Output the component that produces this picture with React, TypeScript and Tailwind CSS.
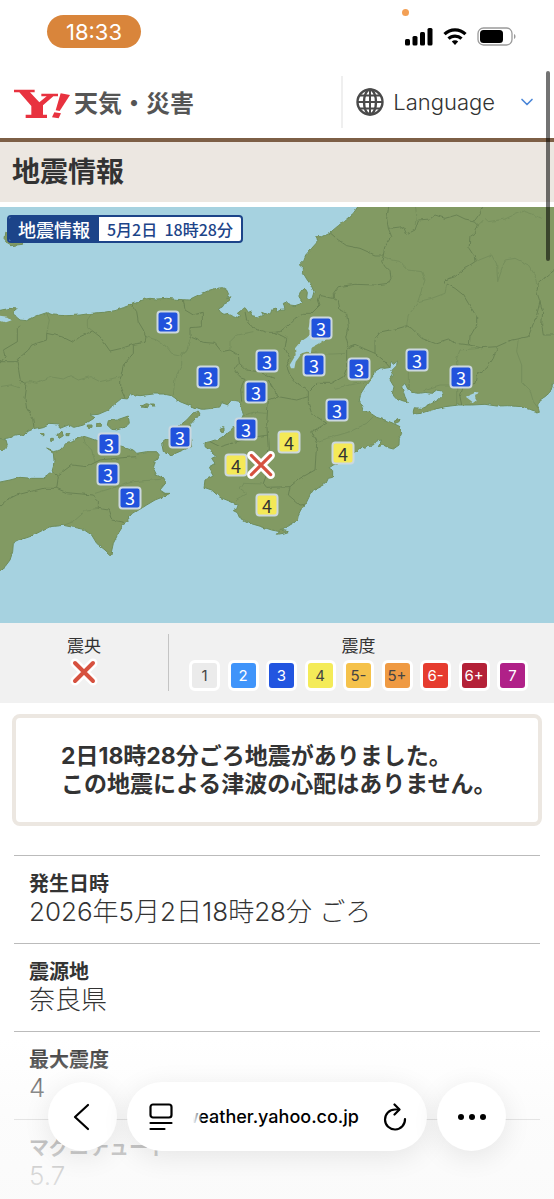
import { ChevronDown } from 'lucide-react'

type Pin = { x: number; y: number; level: 3 | 4 }

const MAP_WIDTH = 554
const MAP_HEIGHT = 416

// Pin centres in map units
const pins: Pin[] = [
  { x: 168, y: 115, level: 3 },
  { x: 321, y: 121, level: 3 },
  { x: 267, y: 154, level: 3 },
  { x: 314, y: 158, level: 3 },
  { x: 359, y: 162, level: 3 },
  { x: 417, y: 153, level: 3 },
  { x: 208, y: 170, level: 3 },
  { x: 461, y: 170, level: 3 },
  { x: 256, y: 185, level: 3 },
  { x: 337, y: 203, level: 3 },
  { x: 246, y: 222, level: 3 },
  { x: 180, y: 230, level: 3 },
  { x: 109, y: 237, level: 3 },
  { x: 108, y: 267, level: 3 },
  { x: 130, y: 291, level: 3 },
  { x: 289, y: 235, level: 4 },
  { x: 343, y: 246, level: 4 },
  { x: 236, y: 258, level: 4 },
  { x: 267, y: 298, level: 4 },
]

const levels = [
  { label: '1', className: 'bg-[#ebebeb] text-[#444]' },
  { label: '2', className: 'bg-[#3f94fa] text-white' },
  { label: '3', className: 'bg-[#2255e0] text-white' },
  { label: '4', className: 'bg-[#f4eb58] text-[#444]' },
  { label: '5-', className: 'bg-[#f5c24b] text-[#444]' },
  { label: '5+', className: 'bg-[#ef9a43] text-[#444]' },
  { label: '6-', className: 'bg-[#e63c2f] text-white' },
  { label: '6+', className: 'bg-[#b42138] text-white' },
  { label: '7', className: 'bg-[#b02188] text-white' },
]

const details = [
  { label: '発生日時', value: '2026年5月2日18時28分 ごろ' },
  { label: '震源地', value: '奈良県' },
  { label: '最大震度', value: '4' },
  { label: 'マグニチュード', value: '5.7' },
]

const honshu =
  'M0 316 30 310 52 312 40 322 48 335 60 345 80 347 95 340 110 333 140 323 160 330 200 332 240 330 275 325 310 322 345 317 370 308 395 298 410 292 430 283 450 280 470 282 500 280 530 283 550 284 565 285 585 275 605 266 630 255 650 250 668 248 680 255 686 268 680 282 690 275 688 290 672 297 668 305 655 312 662 322 672 328 685 325 700 335 712 340 722 332 712 325 725 315 735 308 745 322 755 318 752 332 775 336 790 330 785 322 800 328 812 325 815 316 830 312 828 322 840 316 855 315 850 295 863 290 870 300 885 302 900 297 907 290 897 275 900 262 915 250 922 262 920 280 928 285 937 278 942 260 933 240 920 222 910 205 910 190 898 180 910 168 917 150 935 130 953 110 950 95 965 95 990 83 1015 62 1040 42 1060 25 1077 0 1680 0 1680 530 1662 532 1657 540 1650 562 1635 575 1620 585 1613 600 1618 622 1595 615 1560 605 1525 602 1490 603 1455 598 1415 600 1375 600 1335 605 1295 615 1265 625 1240 627 1240 618 1243 608 1265 610 1290 598 1315 585 1328 572 1325 558 1310 555 1295 565 1275 562 1255 565 1235 562 1223 552 1215 535 1205 545 1210 560 1215 575 1222 590 1210 588 1190 580 1177 565 1182 545 1170 525 1180 510 1175 497 1190 482 1193 468 1180 478 1173 468 1170 488 1155 490 1140 488 1123 498 1120 512 1110 525 1095 545 1083 565 1078 585 1087 605 1090 615 1115 627 1130 637 1155 645 1180 655 1200 665 1205 685 1198 700 1197 720 1180 732 1165 728 1150 720 1135 725 1145 705 1130 708 1120 720 1105 722 1095 730 1085 725 1070 737 1055 750 1040 765 1020 773 1000 780 985 790 998 797 998 817 985 820 978 835 960 845 940 855 930 870 918 895 902 915 895 930 892 947 870 960 840 980 815 975 785 965 750 955 718 937 712 923 700 917 712 910 710 897 685 887 660 877 635 855 612 847 615 825 640 813 625 787 645 775 635 760 650 753 635 740 615 725 615 713 630 710 660 700 690 680 705 665 722 650 730 625 725 610 720 593 695 588 685 600 665 593 660 605 635 610 610 613 585 608 540 590 515 572 490 567 460 567 420 572 395 568 385 582 365 580 350 592 340 600 325 615 295 628 270 630 285 638 250 660 225 667 205 660 180 670 175 657 150 655 130 665 105 670 75 683 70 690 45 693 20 700 -10 708-10 316Z'

const shikoku =
  'M140 732 160 740 180 735 200 713 225 703 245 692 265 698 290 707 330 715 370 725 400 735 410 745 440 740 470 740 478 750 465 770 460 790 470 810 490 820 498 833 480 855 495 865 510 865 490 875 465 885 440 900 400 925 375 953 355 985 340 1015 332 1051 315 1035 290 1015 275 990 250 973 220 967 190 961 150 965 120 980 95 993 60 1005 40 1015 38 1040 30 1065 15 1085-10 1105-10 833 30 825 60 817 95 820 130 820 155 803 160 785 162 765 160 745Z'

const islands =
  'M595 618 600 627 585 645 572 660 570 685 575 725 545 737 510 752 490 740 485 715 495 707 520 700 535 665 560 645 580 623Z M325 647 350 645 385 633 388 655 375 667 350 675 335 673 322 660Z M290 655h14v9h-14Z M262 660h14v7h-14Z M170 690 186 682 190 692 178 700Z M122 686h10v6h-10Z M198 686h9v6h-9Z M152 700h8v6h-8Z M420 603 440 596 452 600 442 605Z M456 597h7v6h-7Z M660 670 672 665 672 677 662 680Z M0 700 18 705 22 720 8 735-10 730Z M1183 648 1200 643 1197 650 1185 655Z M832 988 842 975 865 980 850 985Z M15 82 65 90 68 118 30 122 12 100Z'

const lakes =
  'M930 350 997 375 990 395 975 405 955 418 935 428 933 442 920 440 905 445 895 460 887 470 883 490 873 490 869 480 880 462 887 450 885 430 900 412 920 398 935 385 925 372Z M1397 575 1415 568 1433 560 1425 575 1430 585 1420 593 1410 585Z M0 335 22 338 32 346 15 352 0 347Z'

const borders =
  'M60 362 52 370 52 410 10 435 15 455 0 475 M140 385 140 405 95 420 85 435 50 465 55 490 60 520 80 545 75 580 80 610 98 640 102 668 M140 385 185 395 220 412 240 395 278 378 300 395 330 438 365 430 400 418 435 412 438 395 430 375 415 350 410 320 395 298 M400 418 400 445 370 480 362 515 362 550 375 580 M550 284 555 315 580 330 607 322 607 365 570 368 570 395 610 412 645 415 665 440 690 435 715 450 718 475 740 495 775 500 800 510 825 520 M735 320 740 345 760 370 800 382 825 382 860 400 855 430 870 460 860 485 870 510 885 530 915 550 925 560 M0 470 50 470 M718 475 705 495 720 515 735 520 722 550 725 590 M990 83 1015 105 1040 122 1080 130 1125 150 1150 150 1145 170 1155 185 1170 200 1173 220 1165 235 1125 240 1065 238 1015 245 1000 265 1000 280 960 272 955 285 960 300 935 325 910 325 885 340 870 355 840 380 825 382 M1150 150 1155 125 1175 95 1165 70 1160 40 1167 0 M1165 70 1210 65 1220 88 1245 75 1255 45 1290 42 1305 30 1335 40 1370 30 1395 42 1423 48 1435 60 1425 85 1410 95 1407 130 1423 155 1425 170 1395 190 1365 215 1335 225 1337 235 1365 250 1390 270 1405 295 1430 335 1430 360 1410 395 1408 420 M1423 48 1440 25 1450 0 M1408 420 1365 415 1345 402 1305 415 1265 400 1235 370 1220 362 1185 372 1145 380 1125 405 1125 445 1090 430 1065 418 1045 425 1037 395 1045 365 1040 325 1020 315 1015 290 1000 280 M1408 420 1445 428 1490 425 1535 405 1585 395 1610 330 1620 290 1610 260 1615 235 1645 210 1670 190 M1620 290 1628 320 1625 360 1630 390 1670 390 M1490 430 1480 460 1460 490 1430 510 1425 535 1390 545 1380 575 1385 600 M1125 445 1150 465 1170 488 M1065 418 1040 435 1040 490 1030 515 995 535 950 535 925 560 925 575 M805 525 820 550 835 575 890 585 925 575 925 595 935 625 980 655 935 680 950 715 945 795 900 820 870 845 800 847 790 835 805 795 795 765 805 730 800 655 805 585 835 575 M630 710 660 725 710 710 770 695 805 690 M870 845 865 870 900 900 915 897 M155 800 175 815 170 850 130 850 90 860 50 870 20 885 0 903 M175 810 215 780 260 785 300 765 345 760 410 755 M170 850 200 863 280 870 295 885 295 910 325 915 335 945 375 953'

const lightBorders =
  'M140 323 148 345 140 385 M275 325 262 345 262 365 278 378 M60 535 90 530 110 535 150 515 190 522 210 512 235 525 270 515 300 530 340 520 360 515 M438 395 470 405 500 425 515 445 540 450 560 440 570 400 M565 430 545 455 545 480 525 520 520 570 M760 380 710 390 690 410 690 432 M0 545 30 540 60 548 M1435 60 1455 40 1465 50 1515 42 1545 28 1570 18 1600 28 1625 40 M1425 170 1475 150 1490 180 1493 230 1515 165 1545 160 1585 180 1605 210 1610 240 M1220 362 1225 330 1250 300 1260 270 1275 225 1265 200 1225 195 1200 170 1175 165 1150 155 M1255 290 1295 280 1335 265 1340 240 M1555 400 1550 440 1565 480 1565 530 1590 555 1600 590 1615 610 M933 442 975 448 1040 445 M1370 500 1370 460 1380 435 1440 430 M1000 550 1050 540 1100 530 M950 710 1000 695 1050 680 1100 655 1120 635 M705 885 740 865 720 850 730 835 790 837 M250 695 255 715 275 735 285 770 M285 865 350 845 400 830 490 822 M295 910 260 915 220 950 190 961 M1225 558 1225 500 M730 630 760 622 800 625 M1370 600 1370 540 1320 540 1270 555 M1245 0 1250 30 1245 60'

function StatusBar() {
  return (
    <div className="relative flex h-[70px] items-start justify-between pl-[47px] pr-[37px] pt-[15px]">
      <div className="flex h-[33px] w-[94px] items-center justify-center rounded-full bg-[#d9853b] text-[22px] leading-none text-white">
        18:33
      </div>
      <span className="absolute right-[145px] top-[9px] size-[7px] rounded-full bg-[#f3a055]" />
      <div className="flex items-center gap-[10px] pt-[12px]">
        <svg width="29" height="19" viewBox="0 0 29 19" fill="#000">
          <rect x="1" y="12" width="5" height="6.500" rx="1.500" />
          <rect x="8.500" y="9" width="5" height="9.500" rx="1.500" />
          <rect x="16" y="5" width="5" height="13.500" rx="1.500" />
          <rect x="23.500" y="1" width="5" height="17.500" rx="1.500" />
        </svg>
        <svg width="24" height="19" viewBox="0 0 24 19" fill="none" stroke="#000" strokeWidth="3.200">
          <path d="M1.500 7.200a15 15 0 0 1 21 0" />
          <path d="M5.500 11.700a9.300 9.300 0 0 1 13 0" />
          <path d="M12 18l-3.200-3.400a4.600 4.600 0 0 1 6.400 0Z" fill="#000" stroke="none" />
        </svg>
        <svg width="40" height="19" viewBox="0 0 40 19">
          <rect x="1" y="1" width="34" height="17" rx="5.500" fill="none" stroke="#9a9a9a" strokeWidth="1.300" />
          <rect x="3" y="3" width="23" height="13" rx="3.500" fill="#000" />
          <path d="M37 7c2 .8 2 4.200 0 5Z" fill="#9a9a9a" />
        </svg>
      </div>
    </div>
  )
}

function Header() {
  return (
    <header className="flex h-[68px] items-start justify-between">
      <a href="#" className="flex items-center gap-1 pl-[14px] pt-4" aria-label="Yahoo! 天気・災害">
        <svg width="56" height="30" viewBox="0 0 168 90" fill="#e8323f">
          <path d="M0 2H62V10H48L76 40 98 22H82V14H132V22H118L87 49V77H99V87H35V77H52V51L16 10H0Z" />
          <path d="M140 13 168 18 137 66 125 64Z" />
          <path d="M121 70 141 73 134 88 114 85Z" />
        </svg>
        <span className="text-2xl font-bold leading-9 text-[#555]">天気・災害</span>
      </a>
      <button type="button" className="mt-[6px] flex h-[52px] items-center border-l-2 border-[#efefef] pl-[13px] pr-[17px]">
        <svg width="28" height="28" viewBox="0 0 28 28" fill="none" stroke="#4a4a4a" strokeWidth="2.400">
          <circle cx="14" cy="14" r="12.500" />
          <ellipse cx="14" cy="14" rx="6" ry="12.500" />
          <path d="M14 1.500v25M1.500 14h25M3.500 7.500h21M3.500 20.500h21" strokeWidth="2" />
        </svg>
        <span className="pl-[9px] text-[22px] font-light text-[#333]">Language</span>
        <ChevronDown size={20} strokeWidth={2} className="ml-[22px] text-[#4a86d8]" />
      </button>
    </header>
  )
}

function Cross({ size, stroke }: { size: number; stroke: number }) {
  return (
    <svg width={size} height={size} viewBox="0 0 28 28" strokeLinecap="round" className="block">
      <path d="M5 5 23 23M23 5 5 23" stroke="#fff" strokeWidth={stroke + 5} />
      <path d="M5 5 23 23M23 5 5 23" stroke="#d6513f" strokeWidth={stroke} />
    </svg>
  )
}

function QuakeMap() {
  return (
    <div className="relative overflow-hidden">
      <svg viewBox="0 6 1662 1248" className="block w-full bg-[#a6d2e0]" role="img" aria-label="震度分布図">
        <filter id="coast" x="0" y="0" width="1662" height="1254" filterUnits="userSpaceOnUse">
          <feTurbulence type="fractalNoise" baseFrequency="0.050" numOctaves="2" seed="4" />
          <feDisplacementMap in="SourceGraphic" scale="10" xChannelSelector="R" yChannelSelector="G" />
        </filter>
        <g filter="url(#coast)" strokeLinejoin="round" strokeWidth="3">
          <g fill="#829a64" stroke="#6f8d5b">
            <path d={honshu} />
            <path d={shikoku} />
            <path d={islands} />
          </g>
          <path d={lightBorders} fill="none" stroke="#768f5b" />
          <path d={borders} fill="none" stroke="#6a8353" />
          <path d={lakes} fill="#a6d2e0" />
        </g>
      </svg>

      {/* Report time */}
      <div className="absolute left-[7px] top-[8px] flex h-[28px] items-stretch overflow-hidden rounded border-2 border-[#1c4489] bg-white font-medium">
        <span className="flex items-center bg-[#1c4489] px-[9px] text-[18px] text-white">地震情報</span>
        <span className="flex items-center px-[8px] text-[16px] text-[#1c4489]">5月2日&nbsp; 18時28分</span>
      </div>

      {pins.map((pin) => (
        <span
          key={`${pin.x}-${pin.y}`}
          className={`absolute flex size-[23px] -translate-x-1/2 -translate-y-1/2 items-center justify-center rounded border-2 border-[#ccd8df] pb-[2px] text-[18px] font-normal leading-none ${
            pin.level === 3 ? 'bg-[#2152dc] text-white' : 'bg-[#f4e957] text-[#333]'
          }`}
          style={{ left: `${(pin.x / MAP_WIDTH) * 100}%`, top: `${(pin.y / MAP_HEIGHT) * 100}%` }}
        >
          {pin.level}
        </span>
      ))}

      <span
        className="absolute -translate-x-1/2 -translate-y-1/2"
        style={{ left: `${(261 / MAP_WIDTH) * 100}%`, top: `${(258 / MAP_HEIGHT) * 100}%` }}
      >
        <Cross size={30} stroke={3} />
      </span>
    </div>
  )
}

function Legend() {
  return (
    <div className="flex h-[80px] bg-[#f1f1f1] pt-[11px] text-[17px] leading-6 text-[#333]">
      <div className="flex w-[168px] flex-col items-center">
        <span>震央</span>
        <Cross size={28} stroke={4} />
      </div>
      <div className="h-[57px] border-l border-[#c4c4c4]" />
      <div className="flex flex-1 flex-col items-center pl-[20px] pr-[26px]">
        <span>震度</span>
        <ul className="mt-[2px] flex w-full justify-between">
          {levels.map((level) => (
            <li
              key={level.label}
              className={`font-[Inter] flex h-[31px] w-[31px] items-center justify-center rounded-md border-3 border-white text-[15px] leading-none ${level.className}`}
            >
              {level.label}
            </li>
          ))}
        </ul>
      </div>
    </div>
  )
}

function BrowserBar() {
  return (
    <div className="absolute inset-x-0 bottom-0">
      <div className="flex h-[160px] items-start gap-[10px] bg-linear-to-b from-[#fafafa]/0 via-[#fafafa]/65 to-[#fafafa]/90 px-[48px] pt-[43px]">
        <button
          type="button"
          aria-label="戻る"
          className="flex size-[69px] shrink-0 items-center justify-center rounded-full bg-white shadow-[0_6px_28px_rgba(0,0,0,0.09)]"
        >
          <svg width="20" height="30" viewBox="0 0 20 30" fill="none" stroke="#000" strokeWidth="2.200" strokeLinecap="round" strokeLinejoin="round">
            <path d="M15 3 2 15 15 27" />
          </svg>
        </button>
        <div className="flex h-[69px] min-w-0 flex-1 items-center rounded-full bg-white pl-[22px] pr-[20px] shadow-[0_6px_28px_rgba(0,0,0,0.09)]">
          <button type="button" aria-label="ページ設定">
            <svg width="24" height="28" viewBox="0 0 24 28" fill="none" stroke="#000" strokeWidth="2.200" strokeLinecap="round">
              <rect x="1.500" y="1.500" width="21" height="13" rx="2.500" />
              <path d="M1.500 20h21M1.500 26h14" />
            </svg>
          </button>
          <div className="relative ml-auto mr-[24px] flex w-[178px] justify-end font-[Inter] text-[18px] font-medium leading-7 text-black">
            <span>weather.yahoo.co.jp</span>
            <span className="absolute inset-y-0 left-0 w-[20px] bg-linear-to-r from-white from-60% to-white/30" />
          </div>
          <button type="button" aria-label="再読み込み">
            <svg width="24" height="28" viewBox="0 0 24 28" fill="none" stroke="#000" strokeWidth="2.200" strokeLinecap="round" strokeLinejoin="round">
              <path d="M22 16A10 10 0 1 1 12 6.500H16" />
              <path d="M11.500 1.500 16.500 6.500 11.500 11.500" />
            </svg>
          </button>
        </div>
        <button
          type="button"
          aria-label="その他"
          className="flex size-[69px] shrink-0 items-center justify-center rounded-full bg-white shadow-[0_6px_28px_rgba(0,0,0,0.09)]"
        >
          <svg width="30" height="8" viewBox="0 0 30 8">
            <circle cx="4" cy="4" r="3" />
            <circle cx="15" cy="4" r="3" />
            <circle cx="26" cy="4" r="3" />
          </svg>
        </button>
      </div>
    </div>
  )
}

export default function App() {
  return (
    <div className="relative h-screen overflow-hidden bg-white font-['Inter','Noto_Sans_CJK_JP',sans-serif] text-[#333]">
      <StatusBar />
      <Header />

      <main>
        <h1 className="mb-[5px] flex h-[64px] items-center border-t-4 border-[#7d5f46] bg-[#ece7e1] px-3 text-[28px] font-bold leading-none">
          地震情報
        </h1>

        <div className="font-['Noto_Sans_CJK_JP',sans-serif]">
          <QuakeMap />
        </div>
        <Legend />

        {/* Tsunami notice */}
        <p className="mx-3 mt-[11px] flex h-[112px] items-center rounded-lg border-4 border-[#ece7e1] pl-[45px] text-[23px] font-bold leading-7">
          2日18時28分ごろ地震がありました。
          <br />
          この地震による津波の心配はありません。
        </p>

        <dl className="mx-[14px] mt-[29px]">
          {details.map((item) => (
            <div key={item.label} className="h-[88px] border-t border-[#bbb] px-[15px] pt-[14px]">
              <dt className="text-xl font-bold leading-7">{item.label}</dt>
              <dd className="text-[26px] font-light leading-7">{item.value}</dd>
            </div>
          ))}
        </dl>
      </main>

      <span className="absolute right-[4px] top-[71px] h-[190px] w-[4px] rounded-full bg-black/55" />
      <BrowserBar />
    </div>
  )
}
